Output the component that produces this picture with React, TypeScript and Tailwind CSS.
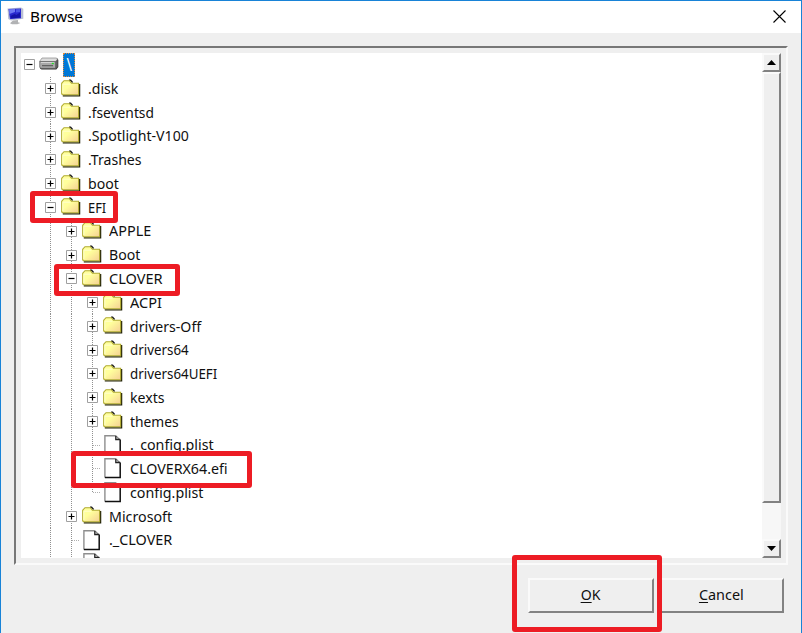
import type { ReactNode } from "react";

type Kind = "drive" | "folder" | "file";
type Node = {
  label: string;
  level: number;
  kind: Kind;
  state?: "open" | "closed";
  // vertical guide coverage inside the node's own cell
  guide?: "none" | "full" | "top";
  fit?: string;
};

const nodes: Node[] = [
  { label: "\\", level: 0, kind: "drive", state: "open", guide: "none" },
  { label: ".disk", level: 1, kind: "folder", state: "closed" },
  { label: ".fseventsd", level: 1, kind: "folder", state: "closed", fit: "scale-x-[0.92]" },
  { label: ".Spotlight-V100", level: 1, kind: "folder", state: "closed" },
  { label: ".Trashes", level: 1, kind: "folder", state: "closed" },
  { label: "boot", level: 1, kind: "folder", state: "closed" },
  { label: "EFI", level: 1, kind: "folder", state: "open", fit: "scale-x-[0.86]" },
  { label: "APPLE", level: 2, kind: "folder", state: "closed", fit: "scale-x-[0.96]" },
  { label: "Boot", level: 2, kind: "folder", state: "closed" },
  { label: "CLOVER", level: 2, kind: "folder", state: "open", fit: "scale-x-[0.97]" },
  { label: "ACPI", level: 3, kind: "folder", state: "closed", fit: "scale-x-[0.97]" },
  { label: "drivers-Off", level: 3, kind: "folder", state: "closed" },
  { label: "drivers64", level: 3, kind: "folder", state: "closed", fit: "scale-x-[0.89]" },
  { label: "drivers64UEFI", level: 3, kind: "folder", state: "closed", fit: "scale-x-[0.89]" },
  { label: "kexts", level: 3, kind: "folder", state: "closed" },
  { label: "themes", level: 3, kind: "folder", state: "closed", fit: "scale-x-[0.92]" },
  { label: "._config.plist", level: 3, kind: "file", fit: "scale-x-[0.95]" },
  { label: "CLOVERX64.efi", level: 3, kind: "file", fit: "scale-x-[0.95]" },
  { label: "config.plist", level: 3, kind: "file", guide: "top", fit: "scale-x-[0.95]" },
  { label: "Microsoft", level: 2, kind: "folder", state: "closed", fit: "scale-x-[0.95]" },
  { label: "._CLOVER", level: 2, kind: "file", fit: "scale-x-[0.96]" },
  { label: "", level: 2, kind: "file" },
];

function Folder() {
  return (
    <svg width="20" height="18" viewBox="0 0 20 18" className="-mt-[2px] block shrink-0">
      <defs>
        <linearGradient id="fold" x1="0" y1="0" x2="1" y2="1">
          <stop offset="0.4" stopColor="#ffff9c" />
          <stop offset="1" stopColor="#f5cf94" />
        </linearGradient>
      </defs>
      <path d="M1.8 16.8H18.6V5" fill="none" stroke="#222208" strokeWidth="1.3" />
      <path d="M8 1.2h1.6l2 2.3" fill="none" stroke="#222" strokeWidth="1.4" />
      <path d="M.7 15V4.2L3 1.7h5.4l2 2.5h7.2v11.6H1.6z" fill="url(#fold)" stroke="#b0aa2e" strokeWidth="1.1" />
      <path d="M1.8 14V5.2h7.5" fill="none" stroke="#ffffd0" strokeWidth="1" />
    </svg>
  );
}

function File() {
  return (
    <svg width="18" height="21" viewBox="0 0 18 21" className="ml-px block shrink-0">
      <path d="M.8 19.5V.8h11.4L15.8 5v14.5z" fill="#fff" />
      <path d="M.9 19.5V.8h11.3" fill="none" stroke="#8e8e8e" strokeWidth="1.4" />
      <path d="M.9 19.6h15.3V4.5" fill="none" stroke="#101010" strokeWidth="1.5" />
      <path d="M12 1l4 4" fill="none" stroke="#888" strokeWidth="1.2" />
      <path d="M11.8 1v3.5h4.4" fill="none" stroke="#222" strokeWidth="1.3" />
    </svg>
  );
}

function Drive() {
  return (
    <svg width="20" height="14" viewBox="0 0 20 14" className="-mt-px -ml-px block shrink-0">
      <path d="M1 5 4 1.5h14.5L19.3 3v7l-2 2.6H2.5L1 11.5z" fill="#333" />
      <path d="M.7 4.2 3 1h14.6l.8 1.2-1.8 2.3H.7z" fill="#dcdcdc" stroke="#888" strokeWidth=".7" />
      <path d="M.7 4.5h16v6.8H1.8L.7 10.2z" fill="#a8a8a8" stroke="#666" strokeWidth=".7" />
      <path d="M16.7 4.7 18.7 2.5v6.8l-2 2.4z" fill="#606060" />
      <path d="M3 8.7h11" stroke="#555" strokeWidth="1.1" />
      <path d="M2 5.5h13" stroke="#d4d4d4" />
      <path d="M12.8 5.8h2v1.3h-2z" fill="#20e020" />
    </svg>
  );
}

function Computer() {
  return (
    <svg width="17" height="18" viewBox="0 0 17 18" className="-mt-[2px] block shrink-0">
      <path d="M.5 1.5 14 .5l2.3 1.2v10L4 13.5 1.2 12z" fill="#b9bfd4" />
      <path d="M1.5 2 14 1.4v9.8L3 12z" fill="#2929cf" />
      <path d="M2 2.3 8 2v3L2.3 7z" fill="#6f7af3" />
      <path d="M9 2.2 13 2v3L9 5.5z" fill="#4d58e4" />
      <path d="m3.5 9 4-2 2 1 3.5-2.5v5L4 11.6z" fill="#1414a6" />
      <path d="M6 13.4 11 13v2.3l2.4.6-3 1.3H5l-2-1z" fill="#b1b2b4" />
    </svg>
  );
}

function Toggle({ open }: { open: boolean }) {
  return (
    <svg width="11" height="11" viewBox="0 0 11 11" className="relative block shrink-0">
      <path d="M.5.5h10v10H.5z" fill="#fff" stroke="#a0a0a0" />
      <path d={open ? "M2.5 5.5h6" : "M2.5 5.5h6M5.5 2.5v6"} stroke="#000" strokeWidth="1.2" />
    </svg>
  );
}

const dotted = "bg-[repeating-linear-gradient(to_bottom,#909090_0_1px,transparent_1px_2px)]";

function Cell({ guide, children }: { guide: "full" | "top" | "none"; children?: ReactNode }) {
  return (
    <div className="grid h-full w-[21.2px] shrink-0 place-items-center">
      {guide !== "none" && (
        <div className={`col-start-1 row-start-1 w-px ${guide === "full" ? "h-full" : "h-1/2 self-start"} ${dotted}`} />
      )}
      {children && <div className="col-start-1 row-start-1 flex w-full justify-center">{children}</div>}
    </div>
  );
}

function Row({ node }: { node: Node }) {
  const { label, level, kind, state, guide = "full", fit = "scale-x-[0.94]" } = node;
  const toggle = state && <Toggle open={state === "open"} />;
  return (
    <div className="flex h-[23.77px] shrink-0 items-center">
      <div className="flex w-[18.6px] shrink-0 pl-[2.6px]">{level === 0 && toggle}</div>
      {level > 1 && <Cell guide="full" />}
      {level > 2 && <Cell guide="full" />}
      {level > 0 && (
        <Cell guide={guide}>
          {toggle || <div className="ml-[8px] w-[7px] border-t border-dotted border-[#b0b0b0]" />}
        </Cell>
      )}
      <div className="flex w-[26.8px] shrink-0 items-center">
        {kind === "drive" ? <Drive /> : kind === "folder" ? <Folder /> : <File />}
      </div>
      {level === 0 ? (
        <div className="-ml-[3px] flex h-6 w-3 items-center justify-center border border-dotted border-[#e08a3c] bg-[#0078d7] text-white">
          <span className="inline-block scale-y-115">{label}</span>
        </div>
      ) : (
        <span className={`-mt-[0.5px] inline-block origin-left whitespace-nowrap ${fit}`}>{label}</span>
      )}
    </div>
  );
}

const raised = "border-t-2 border-l-2 border-r-2 border-b-2 border-t-[#fafafa] border-l-[#fafafa] border-r-[#828282] border-b-[#828282] bg-[#efefef]";

function Arrow({ up }: { up?: boolean }) {
  return (
    <div className={`flex h-[19px] shrink-0 items-center justify-center ${raised}`}>
      <svg width="9" height="5" viewBox="0 0 9 5">
        <path d={up ? "M0 5h9L4.5 0z" : "M0 0h9L4.5 5z"} />
      </svg>
    </div>
  );
}

export default function App() {
  return (
    <div className="relative flex h-[633px] w-[802px] flex-col overflow-hidden border-x border-t border-[#1883d7] bg-[#efefef] font-['Noto_Sans','Open_Sans',sans-serif] text-[15px] leading-none text-[#101010]">
      <header className="flex h-8 shrink-0 items-center bg-white pr-[15px] pl-1.5 text-black">
        <Computer />
        <span className="-mt-[2px] ml-[6px] inline-block origin-left scale-x-[1.02]">Browse</span>
        <svg width="13" height="13" viewBox="0 0 13 13" className="-mt-px ml-auto">
          <path d="m.5.5 12 12m0-12-12 12" stroke="#000" strokeWidth="1.1" />
        </svg>
      </header>

      <main className="mt-[13px] ml-[13px] flex h-[519px] w-[774px] shrink-0 border-2 border-t-[#777] border-r-[#fafafa] border-b-[#fafafa] border-l-[#777] py-[5px] pr-[5px] pl-[5px]">
        <div className="flex min-w-0 flex-1 flex-col overflow-hidden bg-white">
          {nodes.map((node, i) => (
            <Row key={i} node={node} />
          ))}
        </div>
        <div className="flex w-[19px] shrink-0 flex-col bg-[#f7f7f7]">
          <Arrow up />
          <div className={`h-[431px] shrink-0 ${raised}`} />
          <div className="flex-1" />
          <Arrow />
        </div>
      </main>

      <footer className="mt-[13px] flex justify-end gap-[5px] pr-[17px]">
        <button className={`h-[35px] w-[126px] pb-0.5 ${raised}`}>
          <span className="inline-block scale-x-[0.94]"><u className="underline-offset-2">O</u>K</span>
        </button>
        <button className={`h-[35px] w-[125px] pb-0.5 ${raised}`}>
          <span className="inline-block scale-x-[0.96]"><u className="underline-offset-2">C</u>ancel</span>
        </button>
      </footer>

      <div className="absolute top-[190px] left-[29px] h-[32px] w-[88px] rounded-[3px] border-5 border-[#ed1c24]" />
      <div className="absolute top-[263px] left-[53px] h-[32px] w-[126px] rounded-[3px] border-5 border-[#ed1c24]" />
      <div className="absolute top-[450px] left-[70px] h-[37px] w-[181px] rounded-[3px] border-5 border-[#ed1c24]" />
      <div className="absolute top-[554px] left-[511px] h-[77px] w-[150px] rounded-[3px] border-5 border-[#ed1c24]" />
    </div>
  );
}
